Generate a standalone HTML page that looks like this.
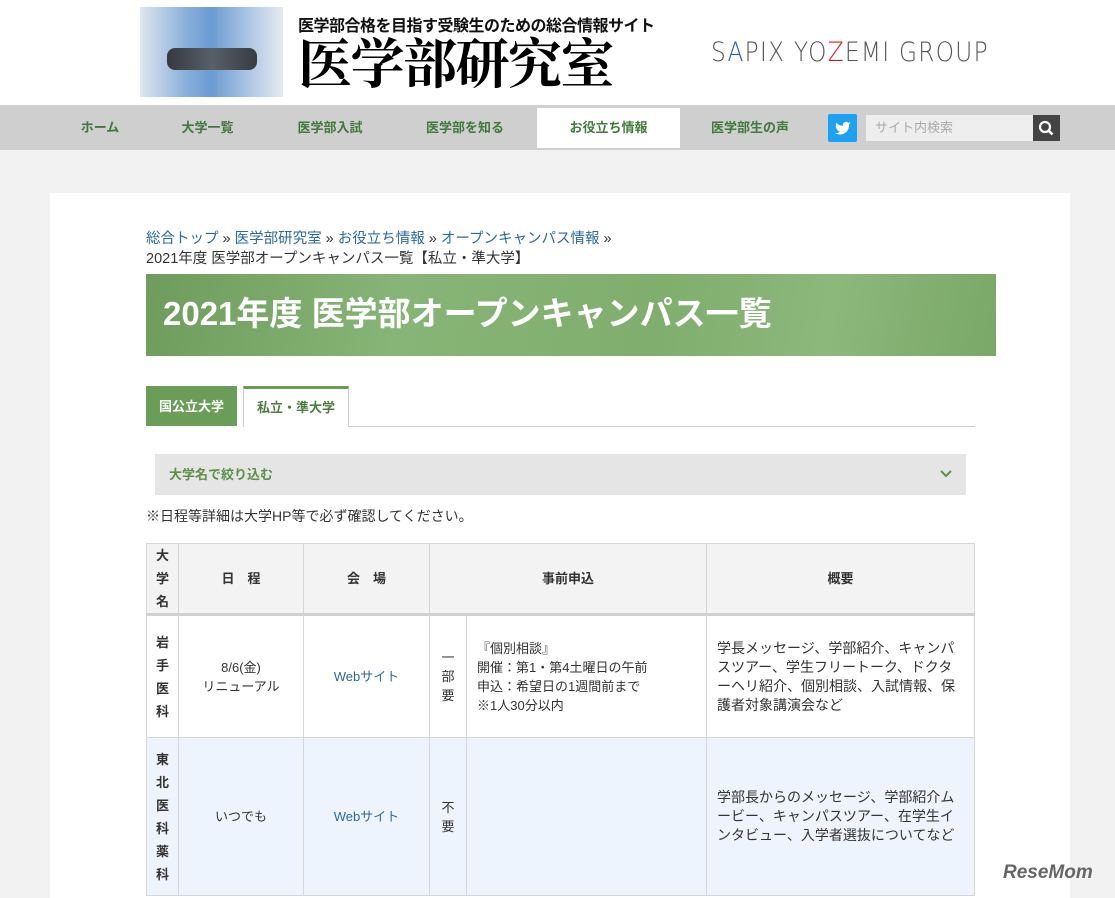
<!DOCTYPE html>
<html><head><meta charset="utf-8"><style>
*{margin:0;padding:0;box-sizing:border-box}
body{width:1115px;height:898px;overflow:hidden;background:#f2f2f2;font-family:"Liberation Sans","Noto Sans CJK JP",sans-serif;color:#333;font-size:13px;position:relative}
.abs{position:absolute}
#hdr{left:0;top:0;width:1115px;height:105px;background:#fff}
#nav{left:0;top:105px;width:1115px;height:45px;background:#cfcfcf}
.nv{position:absolute;top:0;height:45px;line-height:46px;color:#3f7a3a;font-weight:bold;font-size:13px;text-align:center}
#main{left:50px;top:193px;width:1020px;height:705px;background:#fff}
a{color:#2a6aa0;text-decoration:none}
table{border-collapse:collapse;position:absolute;left:146px;top:543px;width:829px;table-layout:fixed}
td,th{border:1px solid #d6d6d6;text-align:center;vertical-align:middle;font-size:13px;line-height:19px}
th{background:#f3f3f3;font-weight:bold;height:71px;border-bottom:3px solid #d0d0d0}
tr.r2 td{background:#eef4fd}
.l{text-align:left;padding-left:10px}
.s{font-size:14px;padding-right:8px}
.vt{font-weight:bold;line-height:23px}
</style></head><body>
<div id="hdr" class="abs">
 <div class="abs" style="left:140px;top:7px;width:143px;height:90px;background:linear-gradient(90deg,#dfe6ee,#8fb3dc 30%,#6a9bd2 50%,#9ebce0 70%,#e6ebf0)"></div>
 <div class="abs" style="left:167px;top:48px;width:90px;height:22px;background:linear-gradient(90deg,#222,#555 50%,#222);border-radius:8px;opacity:0.85"></div>
 <div class="abs" style="left:298px;top:12px;font-size:16px;font-weight:bold;color:#111;letter-spacing:-0.5px">医学部合格を目指す受験生のための総合情報サイト</div>
 <div class="abs" style="left:298px;top:31px;font-size:54px;line-height:60px;font-weight:bold;color:#000;font-family:'Noto Serif CJK SC',serif;letter-spacing:-1.5px">医学部研究室</div>
 <div class="abs" style="left:711px;top:37px;font-size:27px;color:#555;letter-spacing:1.5px;font-family:'DejaVu Sans',sans-serif;font-weight:300;transform:scaleX(0.86);transform-origin:left">S<span style="color:#2a5bb0">A</span>PIX YO<span style="color:#d21c1c">Z</span>EMI GROUP</div>
</div>
<div id="nav" class="abs">
 <div class="nv" style="left:60px;width:80px">ホーム</div>
 <div class="nv" style="left:165px;width:85px">大学一覧</div>
 <div class="nv" style="left:285px;width:90px">医学部入試</div>
 <div class="nv" style="left:415px;width:100px">医学部を知る</div>
 <div class="nv" style="left:537px;width:143px;top:3px;height:40px;line-height:40px;background:#fff">お役立ち情報</div>
 <div class="nv" style="left:700px;width:100px">医学部生の声</div>
 <div class="abs" style="left:828px;top:9px;width:29px;height:28px;background:#1da1f2;border-radius:2px"><svg width="29" height="28" viewBox="0 0 24 24"><path fill="#fff" transform="translate(5,5) scale(0.6)" d="M23 3a10 10 0 0 1-2.9 1.4 4.5 4.5 0 0 0-7.9 3v1A10.7 10.7 0 0 1 3 4s-4 9 5 13a11.6 11.6 0 0 1-7 2c9 5 20 0 20-11.5 0-.3 0-.6-.1-.8A7.7 7.7 0 0 0 23 3z"/></svg></div>
 <div class="abs" style="left:866px;top:10px;width:168px;height:26px;background:#eee;color:#aaa;font-size:13px;line-height:26px;padding-left:9px">サイト内検索</div>
 <div class="abs" style="left:1033px;top:10px;width:27px;height:26px;background:#444"><svg width="27" height="26"><circle cx="12" cy="12" r="5" stroke="#fff" stroke-width="2.2" fill="none"/><path d="M15.5 15.5l4 4" stroke="#fff" stroke-width="2.6"/></svg></div>
</div>
<div id="main" class="abs"></div>
<div class="abs" style="left:146px;top:229px;font-size:14.5px;line-height:20px"><a>総合トップ</a> » <a>医学部研究室</a> » <a>お役立ち情報</a> » <a>オープンキャンパス情報</a> »<br>2021年度 医学部オープンキャンパス一覧【私立・準大学】</div>
<div class="abs" style="left:146px;top:274px;width:850px;height:82px;background:linear-gradient(100deg,#6d9c5c 0%,#87b577 30%,#7fae6d 60%,#8cb87c 80%,#79a867 100%)"></div>
<div class="abs" style="left:163px;top:293px;font-size:33px;font-weight:bold;color:#fff;line-height:42px">2021年度 医学部オープンキャンパス一覧</div>
<div class="abs" style="left:146px;top:386px;width:91px;height:40px;background:#6a9e58;color:#fff;font-weight:bold;line-height:42px;text-align:center;font-size:13px">国公立大学</div>
<div class="abs" style="left:243px;top:386px;width:106px;height:41px;background:#fff;border:1px solid #ccc;border-top:3px solid #6a9e58;border-bottom:none;color:#4d7d3f;font-weight:bold;line-height:38px;text-align:center;font-size:13px">私立・準大学</div>
<div class="abs" style="left:349px;top:426px;width:626px;height:1px;background:#ccc"></div>
<div class="abs" style="left:155px;top:454px;width:811px;height:41px;background:#e5e5e5;color:#5b9048;font-weight:bold;line-height:41px;padding-left:14px;font-size:13px">大学名で絞り込む<svg class="abs" style="right:14px;top:15px" width="12" height="10"><path d="M1 2l5 5 5-5" stroke="#5b9048" stroke-width="2" fill="none"/></svg></div>
<div class="abs" style="left:146px;top:506px;font-size:14px">※日程等詳細は大学HP等で必ず確認してください。</div>
<table>
<colgroup><col style="width:32px"><col style="width:125px"><col style="width:126px"><col style="width:37px"><col style="width:240px"><col style="width:268px"></colgroup>
<tr><th class="vt">大<br>学<br>名</th><th>日　程</th><th>会　場</th><th colspan="2">事前申込</th><th>概要</th></tr>
<tr style="height:123px"><td class="vt">岩<br>手<br>医<br>科</td><td>8/6(金)<br>リニューアル</td><td><a>Webサイト</a></td><td>一<br>部<br>要</td><td class="l">『個別相談』<br>開催：第1・第4土曜日の午前<br>申込：希望日の1週間前まで<br>※1人30分以内</td><td class="l s">学長メッセージ、学部紹介、キャンパスツアー、学生フリートーク、ドクターヘリ紹介、個別相談、入試情報、保護者対象講演会など</td></tr>
<tr class="r2" style="height:158px"><td class="vt">東<br>北<br>医<br>科<br>薬<br>科</td><td>いつでも</td><td><a>Webサイト</a></td><td>不<br>要</td><td></td><td class="l s">学部長からのメッセージ、学部紹介ムービー、キャンパスツアー、在学生インタビュー、入学者選抜についてなど</td></tr>
</table>
<div class="abs" style="left:1003px;top:862px;font-size:19px;font-weight:bold;color:#666;font-style:italic">ReseMom</div>
</body></html>
